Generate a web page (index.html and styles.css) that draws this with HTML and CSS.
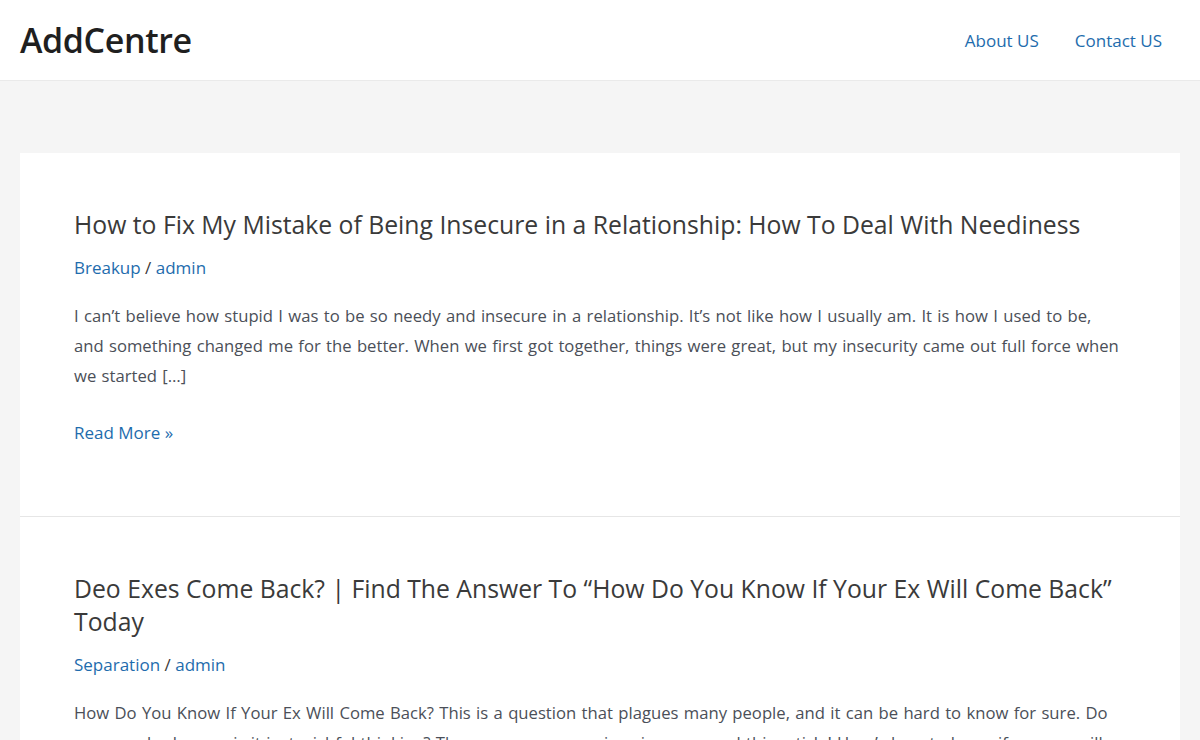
FILE: index.html
```html
<!DOCTYPE html>
<html lang="en">
<head>
    <meta charset="UTF-8">
    <meta name="viewport" content="width=device-width, initial-scale=1.0">
    <title>AddCentre</title>
    <link rel="stylesheet" href="styles.css">
</head>
<body>
    <header class="site-header">
        <a class="site-title" href="#">AddCentre</a>
        <nav class="main-nav">
            <a href="#">About US</a>
            <a href="#">Contact US</a>
        </nav>
    </header>

    <main class="content">
        <article class="post">
            <h2 class="entry-title">How to Fix My Mistake of Being Insecure in a Relationship: How To Deal With Neediness</h2>
            <div class="entry-meta"><a href="#">Breakup</a> / <a href="#">admin</a></div>
            <p class="excerpt">I can’t believe how stupid I was to be so needy and insecure in a relationship. It’s not like how I usually am. It is how I used to be, and something changed me for the better. When we first got together, things were great, but my insecurity came out full force when we started […]</p>
            <a class="read-more" href="#">Read More »</a>
        </article>

        <article class="post">
            <h2 class="entry-title">Deo Exes Come Back? | Find The Answer To “How Do You Know If Your Ex Will Come Back” Today</h2>
            <div class="entry-meta"><a href="#">Separation</a> / <a href="#">admin</a></div>
            <p class="excerpt">How Do You Know If Your Ex Will Come Back? This is a question that plagues many people, and it can be hard to know for sure. Do you wonder how or is it just wishful thinking? There are some warning signs, so read this article! Here’s how to know if your ex will come back […]</p>
            <a class="read-more" href="#">Read More »</a>
        </article>
    </main>
</body>
</html>
```

FILE: styles.css
```css
* {
    margin: 0;
    padding: 0;
    box-sizing: border-box;
}

body {
    background: #f5f5f5;
    font-family: 'Open Sans', 'Noto Sans', sans-serif;
    color: #3a3a3a;
}

a {
    color: #1e6cad;
    text-decoration: none;
}

.site-header {
    height: 81px;
    background: #fff;
    border-bottom: 1px solid #eaeaea;
    display: flex;
    align-items: center;
    justify-content: space-between;
    padding: 0 38px 0 20px;
}

.site-title {
    font-size: 34px;
    font-weight: 600;
    color: #1f1f1f;
    letter-spacing: -0.4px;
}

.main-nav {
    display: flex;
    gap: 36px;
}

.main-nav a {
    font-size: 17px;
}

.content {
    padding: 72px 20px 0;
}

.post {
    background: #fff;
    padding: 55px 56px 72px 54px;
    border-bottom: 1px solid #e6e6e6;
}

.entry-title {
    font-size: 24.75px;
    font-weight: 400;
    line-height: 33px;
    color: #3a3a3a;
}

.entry-meta {
    margin-top: 13px;
    font-size: 17px;
    line-height: 1.6;
}

.excerpt {
    margin-top: 20px;
    font-size: 16.67px;
    word-spacing: 1px;
    line-height: 30px;
    color: #4b4f58;
}

.read-more {
    display: inline-block;
    margin-top: 30px;
    font-size: 17px;
}
```
